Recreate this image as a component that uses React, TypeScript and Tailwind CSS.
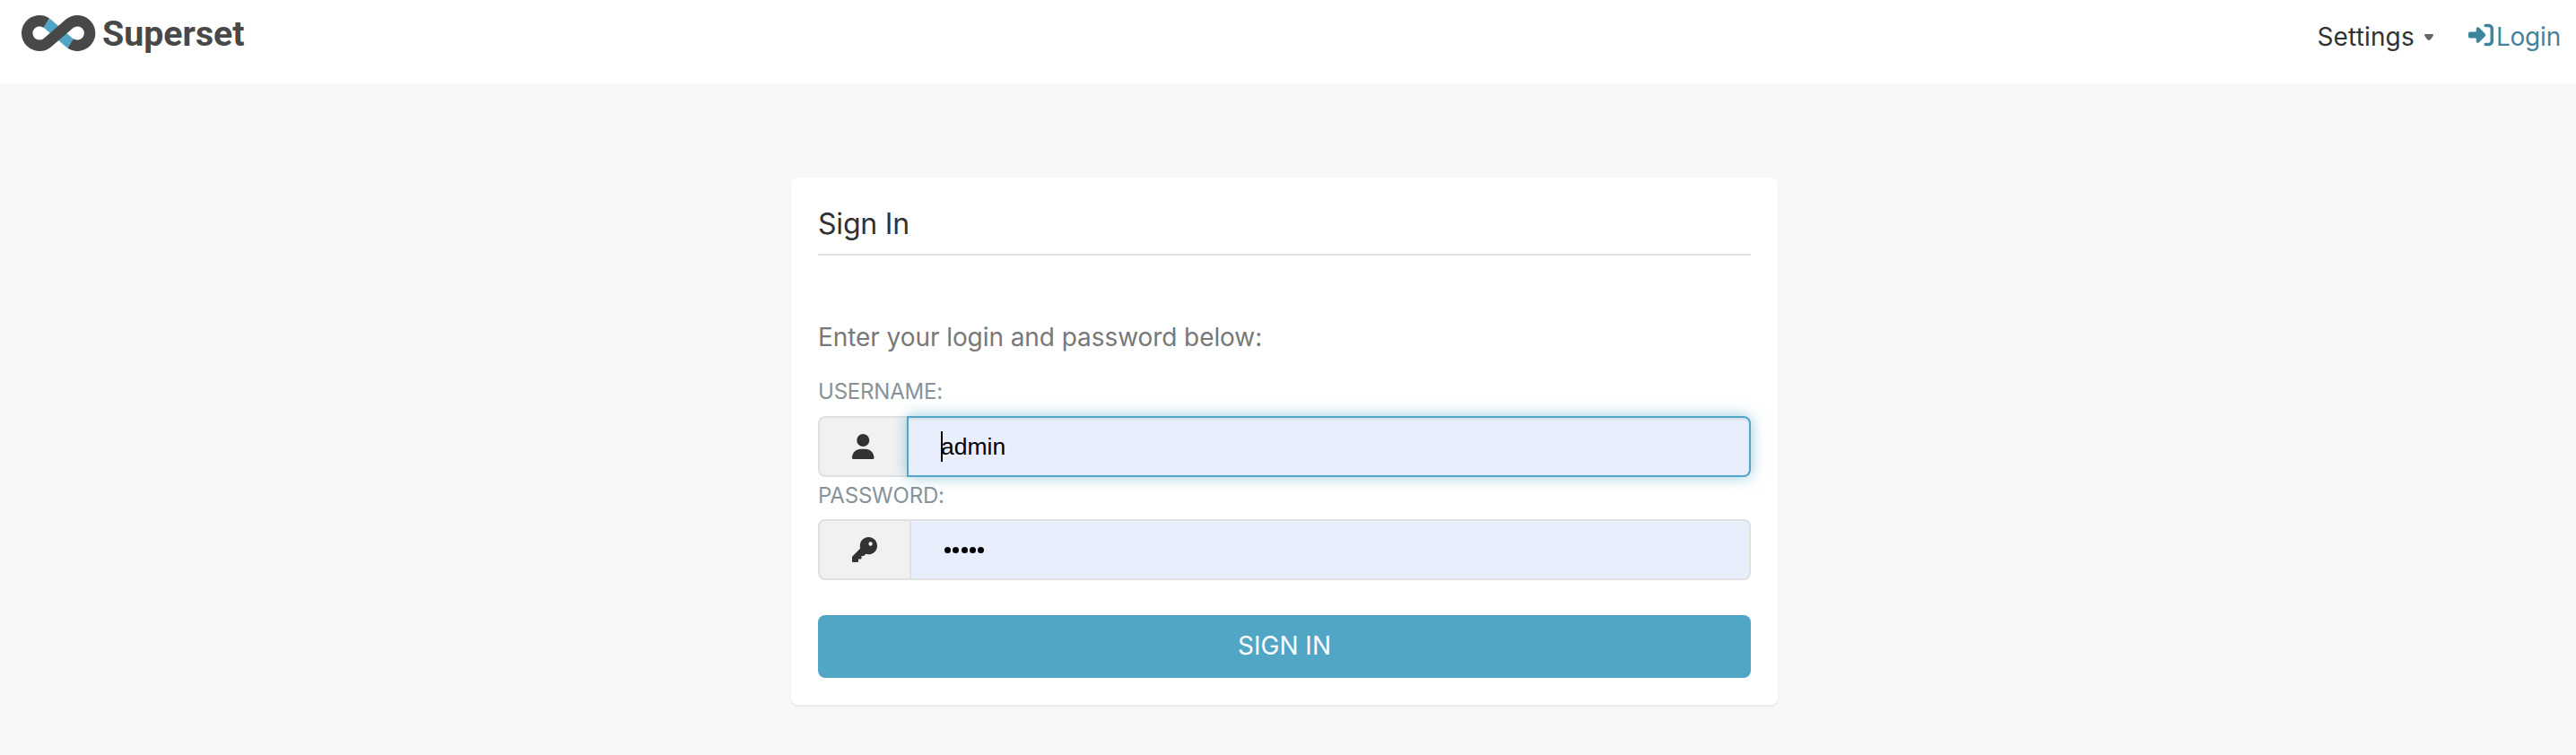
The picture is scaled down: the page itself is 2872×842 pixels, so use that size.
import React from "react";
import { FaKey, FaRightToBracket, FaUser } from "react-icons/fa6";

function Logo() {
  return (
    <a className="flex items-start text-[#484848]" aria-label="Superset">
      <svg width="84" height="42" viewBox="0 0 84 42" fill="none" className="mt-4 block">
        <path d="M28.7 9.5 L30 10.5 L54.3 31.5 L55.6 32.5" stroke="#51a5c5" strokeWidth="12.2" />
        <path
          d="M28.7 9.55 A13.8 13.8 0 1 0 30 31.46 L54.3 10.54 A13.8 13.8 0 1 1 55.6 32.45"
          stroke="#484848"
          strokeWidth="12.4"
        />
      </svg>
      <span className="ml-[7px] mt-[15px] font-['Roboto',sans-serif] text-[39.3px] font-bold leading-[46px]">
        Superset
      </span>
    </a>
  );
}

function Navbar() {
  return (
    <header className="flex h-[94px] items-start justify-between bg-white pl-[23px] pr-[17px]">
      <Logo />
      <nav className="flex pt-[24px] text-[28px] leading-[34px]">
        <a className="flex items-start text-[#323232]">
          <span className="tracking-[0.15px]">Settings</span>
          <svg width="10" height="7" viewBox="0 0 10 7" className="ml-[11px] mt-[14px] block">
            <path d="M1 0H9Q10 0 10 1Q10 2.2 6.8 5.9Q5 7.9 3.2 5.9Q0 2.2 0 1Q0 0 1 0Z" fill="#666666" />
          </svg>
        </a>
        <a className="ml-[39px] flex items-start text-[#45829b]">
          <FaRightToBracket className="mt-[1px] size-7 text-[#3f849f]" />
          <span className="ml-[3px] tracking-[-0.2px]">Login</span>
        </a>
      </nav>
    </header>
  );
}

function Label({ children }: { children: React.ReactNode }) {
  return (
    <label className="block h-[36px] pt-px text-[24px] leading-[34px] tracking-[-0.2px] text-[#879399]">
      {children}
    </label>
  );
}

export default function App() {
  return (
    <div className="min-h-[842px] bg-[#f7f7f7] font-['Inter',sans-serif]">
      <Navbar />
      <main className="flex justify-center pr-2 pt-[104px]">
        <section className="h-[588px] w-[1100px] rounded-lg bg-white px-[30px] shadow-[0_2px_2px_rgba(0,0,0,0.05)]">
          <h1 className="h-[87px] border-b-2 border-[#e0e0e0] pt-[32px] text-[32px] leading-[40px] tracking-[-0.2px] text-[#323232]">
            Sign In
          </h1>
          <form>
            <p className="mt-[73px] h-[61px] text-[28px] leading-[36px] tracking-[-0.07px] text-[#787878]">
              Enter your login and password below:
            </p>
            <Label>USERNAME:</Label>
            <div className="mt-[9px] flex h-[68px]">
              <span className="flex w-[101px] items-center rounded-l-lg border-2 border-r-0 border-[#e0e0e0] bg-[#f1f1f1] pl-[36px] text-[#323232]">
                <FaUser className="h-7 w-[24.5px]" />
              </span>
              <div className="relative -ml-[2px] flex flex-1 items-center rounded-r-lg border-2 border-[#51a5c5] bg-[#e8eefc] pl-[36px] pt-[2px] font-['Liberation_Sans',sans-serif] text-[26.5px] text-black shadow-[inset_0_2px_2px_rgba(0,0,0,0.075),0_0_16px_rgba(81,165,197,0.6)]">
                admin
                <span className="absolute left-[36px] top-[15px] h-[34px] w-[2px] bg-black" />
              </div>
            </div>
            <div className="mt-[3px]">
              <Label>PASSWORD:</Label>
            </div>
            <div className="mt-[8px] flex h-[68px]">
              <span className="flex w-[104px] items-center rounded-l-lg border-2 border-[#e0e0e0] bg-[#f1f1f1] pl-[36px] text-[#323232]">
                <FaKey className="size-7" />
              </span>
              <div className="flex flex-1 items-center gap-[2.35px] rounded-r-lg border-2 border-l-0 border-[#e0e0e0] bg-[#e8eefc] pl-[37px] pt-px">
                {[0, 1, 2, 3, 4].map((i) => (
                  <span key={i} className="size-[7px] rounded-full bg-black" />
                ))}
              </div>
            </div>
            <button
              type="button"
              className="mt-[39px] block h-[70px] w-full rounded-lg bg-[#51a5c5] pb-[2px] text-[28px] leading-[36px] text-white"
            >
              SIGN IN
            </button>
          </form>
        </section>
      </main>
    </div>
  );
}
